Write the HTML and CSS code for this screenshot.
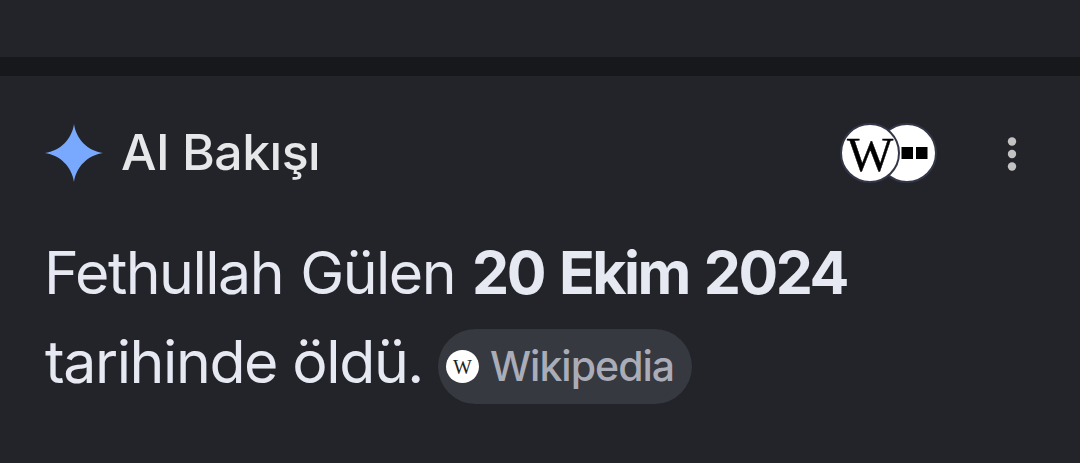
FILE: index.html
```html
<!DOCTYPE html>
<html lang="tr">
<head>
<meta charset="UTF-8" />
<meta name="viewport" content="width=device-width, initial-scale=1" />
<title>AI Bakışı</title>
<link rel="stylesheet" href="styles.css">
</head>
<body>

  <!-- End of the previous card -->
  <div class="previous-card"></div>

  <main class="overview">
    <header class="overview-header">
      <svg class="spark" viewBox="0 0 58 58" aria-hidden="true">
        <path d="M29 0 C31 15 43 27 58 29 C43 31 31 43 29 58 C27 43 15 31 0 29 C15 27 27 15 29 0 Z" />
      </svg>
      <h1>AI Bakışı</h1>

      <div class="sources">
        <span class="source source-wiki">W</span>
        <span class="source source-dots">
          <svg viewBox="0 0 27 12" aria-hidden="true">
            <rect x="0.5" y="0" width="11.5" height="12" />
            <rect x="15" y="0" width="11.5" height="12" />
          </svg>
        </span>
      </div>

      <svg class="menu" viewBox="0 0 10 34" role="img" aria-label="Menü">
        <circle cx="5" cy="4.5" r="4.2" />
        <circle cx="5" cy="17" r="4.2" />
        <circle cx="5" cy="29.5" r="4.2" />
      </svg>
    </header>

    <div class="answer">
      <div class="line">
        <span class="name">Fethullah Gülen</span>
        <strong>20 Ekim 2024</strong>
      </div>
      <div class="line">
        <span class="ending">tarihinde öldü.</span>
        <a class="chip">
          <span class="chip-icon">W</span>
          <span class="chip-label">Wikipedia</span>
        </a>
      </div>
    </div>
  </main>

</body>
</html>
```
FILE: styles.css
```css
* {
  box-sizing: border-box;
}

body {
  margin: 0;
  height: 463px;
  overflow: hidden;
  background: #232429;
  color: #e6e9f2;
  font-family: Inter, "Noto Sans", sans-serif;
}

/* Dark gap between the two cards */
.previous-card {
  height: 76px;
  border-bottom: 19px solid #17181b;
}

.overview {
  padding: 46px 0 0 45px;
}

.overview-header {
  display: flex;
  align-items: center;
  height: 62px;
}

.spark {
  width: 58px;
  height: 58px;
  fill: #78a9ff;
}

h1 {
  margin: 0 0 2px 18px;
  font-size: 50px;
  font-weight: 500;
  line-height: 60px;
  letter-spacing: -0.5px;
  color: #e6e7e8;
  white-space: nowrap;
}

/* Overlapping source logos */
.sources {
  display: flex;
  margin-left: auto;
}

.source {
  display: flex;
  align-items: center;
  justify-content: center;
  width: 60px;
  height: 60px;
  border: 2px solid #343748;
  border-radius: 50%;
  background: #fff;
  color: #000;
}

.source-wiki {
  position: relative;
  z-index: 1;
  padding-top: 4px;
  font-family: "Liberation Serif", serif;
  font-size: 49px;
  line-height: 52px;
  -webkit-text-stroke: 0.4px #000;
}

.source-dots {
  margin-left: -23px;
  padding-left: 15px;
}

.source-dots svg {
  width: 27px;
  height: 12px;
}

.menu {
  width: 10px;
  height: 34px;
  margin: 1px 63px 0 70px;
  fill: #c2c2c2;
}

.answer {
  padding-top: 44px;
  font-size: 59px;
  line-height: 89px;
}

.line {
  display: flex;
  align-items: center;
  height: 89px;
  white-space: nowrap;
}

.name {
  width: 428px;
  margin-left: -1px;
  letter-spacing: -1.5px;
  word-spacing: 2px;
}

strong {
  font-weight: 700;
  letter-spacing: -2.5px;
  word-spacing: 3.5px;
}

.ending {
  width: 393px;
  letter-spacing: -1.4px;
}

.chip {
  display: flex;
  align-items: center;
  width: 254px;
  height: 75px;
  margin-top: 10px;
  padding-left: 8px;
  border-radius: 38px;
  background: #363940;
  color: #aaadb8;
}

.chip-icon {
  display: flex;
  align-items: center;
  justify-content: center;
  width: 33px;
  height: 33px;
  padding-top: 2px;
  border-radius: 50%;
  background: #fff;
  color: #222;
  font-family: "Liberation Serif", serif;
  font-size: 20px;
  line-height: 31px;
}

.chip-label {
  margin-left: 11px;
  font-size: 41px;
  font-weight: 500;
  line-height: 75px;
  letter-spacing: -1px;
}
```
